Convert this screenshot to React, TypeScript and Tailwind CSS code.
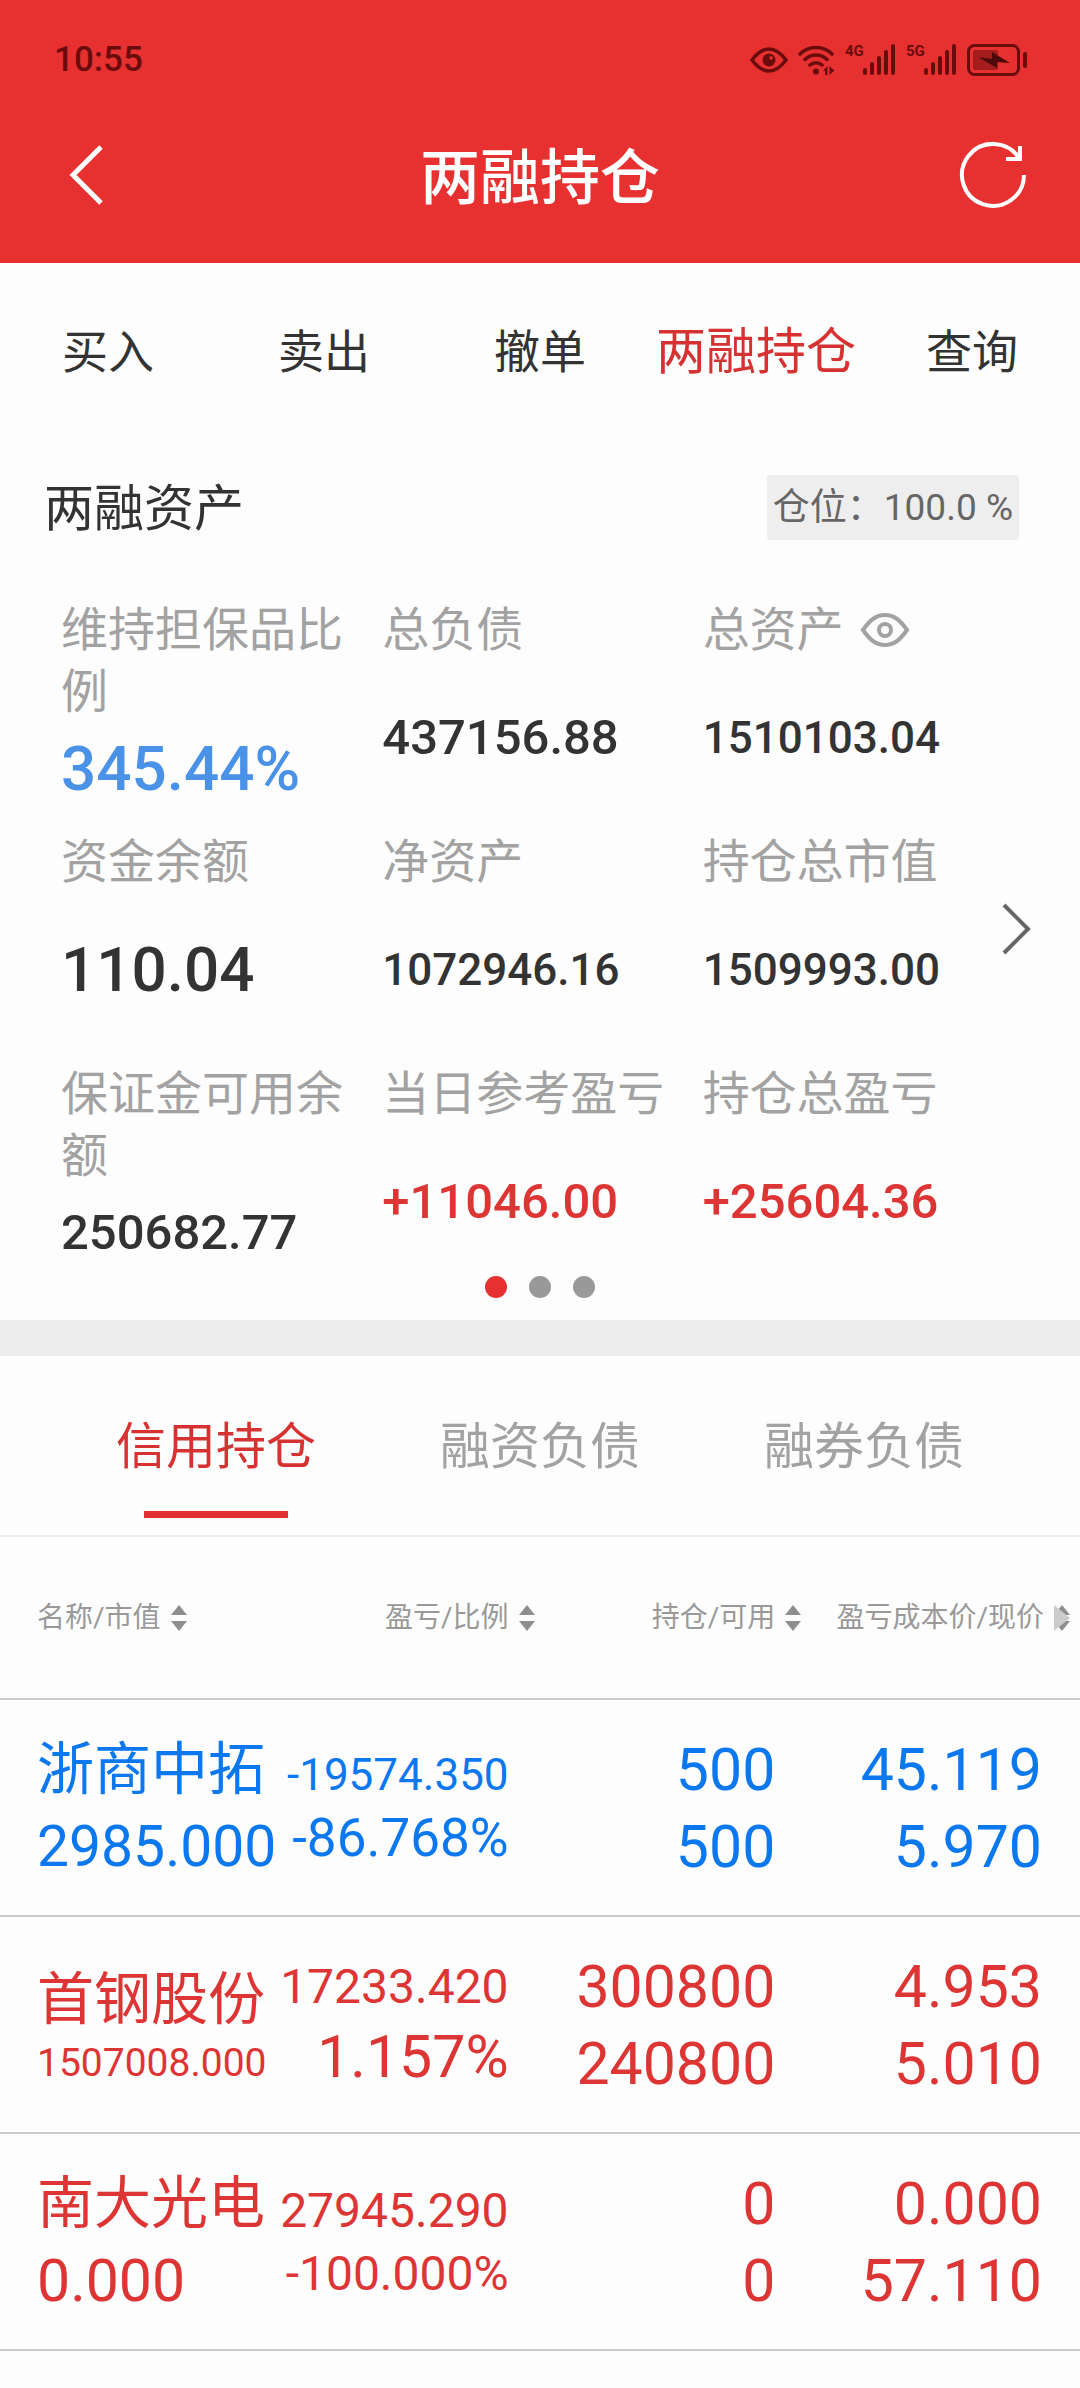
type Tone = 'up' | 'down'

const NAV = ['买入', '卖出', '撤单', '两融持仓', '查询']
const TABS = ['信用持仓', '融资负债', '融券负债']

const ASSETS = [
  { label: '维持担保品比例', value: '345.44%', style: 'text-[62px]/[68px] text-[#4a92e8]' },
  { label: '总负债', value: '437156.88', style: 'text-[49px]/[68px] text-[#333]' },
  { label: '总资产', value: '1510103.04', style: 'text-[44px]/[68px] text-[#333]', eye: true },
  { label: '资金余额', value: '110.04', style: 'text-[62px]/[68px] text-[#333]' },
  { label: '净资产', value: '1072946.16', style: 'text-[44px]/[68px] text-[#333]' },
  { label: '持仓总市值', value: '1509993.00', style: 'text-[44px]/[68px] text-[#333]' },
  { label: '保证金可用余额', value: '250682.77', style: 'text-[49px]/[68px] text-[#333]' },
  { label: '当日参考盈亏', value: '+11046.00', style: 'text-[49px]/[68px] text-[#dd3434]' },
  { label: '持仓总盈亏', value: '+25604.36', style: 'text-[49px]/[68px] text-[#dd3434]' },
]

// long numbers step down in size so that they stay inside their column
const XL = 'text-[59px]/[77px]'
const LG = 'text-[57px]/[77px]'
const MD = 'text-[53px]/[66px]'
const SM = 'text-[48px]/[63px]'
const XS = 'text-[44px]/[60px]'
const XXS = 'text-[39px]/[51px]'

const HOLDINGS: { name: string; tone: Tone; cells: [string, string][][] }[] = [
  {
    name: '浙商中拓',
    tone: 'down',
    cells: [
      [['浙商中拓', LG], ['2985.000', LG]],
      [['-19574.350', XS], ['-86.768%', MD]],
      [['500', XL], ['500', XL]],
      [['45.119', XL], ['5.970', XL]],
    ],
  },
  {
    name: '首钢股份',
    tone: 'up',
    cells: [
      [['首钢股份', LG], ['1507008.000', XXS]],
      [['17233.420', SM], ['1.157%', XL]],
      [['300800', XL], ['240800', XL]],
      [['4.953', XL], ['5.010', XL]],
    ],
  },
  {
    name: '南大光电',
    tone: 'up',
    cells: [
      [['南大光电', LG], ['0.000', XL]],
      [['27945.290', SM], ['-100.000%', SM]],
      [['0', XL], ['0', XL]],
      [['0.000', XL], ['57.110', XL]],
    ],
  },
]

const CELL_STYLES = [
  'pl-[37px] text-left',
  'pr-[26px] text-right',
  'pr-[26px] text-right',
  'pr-[38px] text-right',
]

function Signal({ label }: { label: string }) {
  return (
    <div className="flex items-start">
      <span className="w-[18px] text-[15px]/[14px] font-bold">{label}</span>
      <svg width="33" height="32" viewBox="0 0 33 32" fill="currentColor">
        <rect x="0" y="24" width="4" height="7" rx="2" />
        <rect x="7" y="18" width="4" height="13" rx="2" />
        <rect x="14" y="12" width="4" height="19" rx="2" />
        <rect x="21" y="6" width="4" height="25" rx="2" />
        <rect x="28" y="0" width="4" height="31" rx="2" />
      </svg>
    </div>
  )
}

function StatusBar() {
  return (
    <div className="flex items-center justify-between pt-[42px] pr-[52px] pl-[54px] text-[#6b0c0c]">
      <span className="text-[35px]/[36px] font-medium">10:55</span>
      <div className="flex items-center gap-[10px]">
        <svg width="38" height="26" viewBox="0 0 38 26" fill="none" stroke="currentColor" strokeWidth="3.5">
          <path d="M2 13C8 5 13 2 19 2s11 3 17 11c-6 8-11 11-17 11S8 21 2 13z" />
          <circle cx="19" cy="13" r="6.5" fill="currentColor" stroke="none" />
          <circle cx="21" cy="11" r="1.8" fill="#e73030" stroke="none" />
        </svg>
        <svg width="37" height="32" viewBox="0 0 37 32" fill="none" stroke="currentColor" strokeWidth="3.5" strokeLinecap="round">
          <path d="M2 10a23 23 0 0 1 32 0M7 15.500a16 16 0 0 1 22 0M12 21a9 9 0 0 1 12 0" />
          <circle cx="18" cy="27.500" r="3" fill="currentColor" stroke="none" />
          <path d="M25 27l4.500-5v9H27v-4zM31.500 22v9l5-4.500-2.500-2z" fill="currentColor" stroke="none" />
        </svg>
        <Signal label="4G" />
        <Signal label="5G" />
        <svg width="61" height="32" viewBox="0 0 61 32" fill="none">
          <rect x="1.500" y="1.500" width="50" height="29" rx="6" stroke="currentColor" strokeWidth="3" />
          <rect x="6" y="6" width="25" height="20" rx="2" fill="#a51c1c" />
          <path d="M11 13l14 2V8l18 11-13-1v6z" fill="#4d0a0a" />
          <rect x="56" y="8" width="4" height="16" rx="2" fill="currentColor" />
        </svg>
      </div>
    </div>
  )
}

function Header() {
  return (
    <header className="bg-[#e73030] pb-10">
      <StatusBar />
      <div className="mt-[49px] flex h-24 items-center justify-between pr-[53px] pl-[69px] text-white">
        <button type="button" aria-label="返回" className="w-[52px]">
          <svg width="36" height="60" viewBox="0 0 36 60" fill="none" stroke="currentColor" strokeWidth="5">
            <path d="M32 2L4 30l28 28" />
          </svg>
        </button>
        <h1 className="pt-2 text-[60px]/[80px] font-medium">两融持仓</h1>
        <button type="button" aria-label="刷新">
          <svg width="68" height="68" viewBox="0 0 68 68" fill="none" stroke="currentColor" strokeWidth="4">
            <path d="M65 34A31 31 0 1 1 60 17" />
            <path d="M61 5v13H47" />
          </svg>
        </button>
      </div>
    </header>
  )
}

function Assets() {
  return (
    <section className="mt-[34px] pb-[22px]">
      <div className="flex items-center justify-between pr-[61px] pl-[44px]">
        <h2 className="pt-1 text-[50px]/[61px] text-[#333]">两融资产</h2>
        <span className="rounded-sm bg-[#eee] px-[6px] text-[37px]/[65px] text-[#666]">仓位：100.0 %</span>
      </div>
      <div className="mt-[59px] flex items-start pr-[49px] pl-[61px]">
        <dl className="grid flex-1 grid-cols-[322fr_321fr_300fr] gap-y-7">
          {ASSETS.map((a) => (
            <div key={a.label} className="flex h-51 flex-col">
              <dt className="flex items-center gap-4 text-[47px]/[62px] text-[#a2a2a2]">
                {a.label}
                {a.eye && (
                  <button type="button" aria-label="隐藏金额">
                    <svg width="50" height="34" viewBox="0 0 50 34" fill="none" stroke="currentColor" strokeWidth="4">
                      <path d="M3 17C10 7 16 2 25 2s15 5 22 15c-7 10-13 15-22 15S10 27 3 17z" />
                      <circle cx="25" cy="17" r="6" />
                    </svg>
                  </button>
                )}
              </dt>
              <dd className={`flex flex-1 items-center pt-3 font-medium ${a.style}`}>{a.value}</dd>
            </div>
          ))}
        </dl>
        <button type="button" aria-label="下一页" className="self-center pb-2 text-[#666]">
          <svg width="29" height="52" viewBox="0 0 29 52" fill="none" stroke="currentColor" strokeWidth="4">
            <path d="M2 2l24 24L2 50" />
          </svg>
        </button>
      </div>
      <div className="mt-[9px] flex justify-center gap-[22px]">
        <span className="size-[22px] rounded-full bg-[#e73030]" />
        <span className="size-[22px] rounded-full bg-[#999]" />
        <span className="size-[22px] rounded-full bg-[#999]" />
      </div>
    </section>
  )
}

function SortIcon() {
  return (
    <svg width="16" height="26" viewBox="0 0 16 26" fill="#8e8e8e">
      <path d="M8 0l8 10H0zM8 26l8-10H0z" />
    </svg>
  )
}

// last column: the sort arrows sit behind the scroll hint
function MoreIcon() {
  return (
    <svg width="16" height="26" viewBox="0 0 16 26">
      <path d="M8 0l8 10H0zM8 26l8-10H0z" fill="#8e8e8e" />
      <path d="M0 0l16 13L0 26z" fill="#cbcbcb" />
    </svg>
  )
}

function SortHead({ label, more }: { label: string; more?: boolean }) {
  return (
    <button type="button" className="inline-flex items-center gap-[10px] whitespace-nowrap">
      {label}
      {more ? <MoreIcon /> : <SortIcon />}
    </button>
  )
}

function Holdings() {
  return (
    <table className="w-full table-fixed border-collapse">
      <thead>
        <tr className="h-[162px] border-b-2 border-[#ccc] text-[28px]/[36px] text-[#999]">
          <th className="w-[25%] pl-[37px] text-left font-normal">
            <SortHead label="名称/市值" />
          </th>
          <th className="w-[24.5%] text-right font-normal">
            <SortHead label="盈亏/比例" />
          </th>
          <th className="w-[24.7%] text-right font-normal">
            <SortHead label="持仓/可用" />
          </th>
          <th className="pr-[10px] text-right font-normal">
            <SortHead label="盈亏成本价/现价" more />
          </th>
        </tr>
      </thead>
      <tbody>
        {HOLDINGS.map((h) => (
          <tr
            key={h.name}
            className={`h-[217px] border-b-2 border-[#ccc] ${h.tone === 'up' ? 'text-[#dd3434]' : 'text-[#0b78f0]'}`}
          >
            {h.cells.map((lines, i) => (
              <td key={i} className={`whitespace-nowrap ${CELL_STYLES[i]}`}>
                {lines.map(([text, size], j) => (
                  <span key={j} className={`block ${size}`}>
                    {text}
                  </span>
                ))}
              </td>
            ))}
          </tr>
        ))}
      </tbody>
    </table>
  )
}

export default function App() {
  return (
    <div className="min-h-screen bg-[#fdfdfd] font-[Roboto,'Noto_Sans_CJK_SC',sans-serif]">
      <Header />
      <nav className="grid h-[178px] grid-cols-5 items-center">
        {NAV.map((item) => (
          <button
            key={item}
            type="button"
            className={item === '两融持仓' ? 'text-[50px]/[64px] text-[#d63232]' : 'text-[46px]/[64px] text-[#333]'}
          >
            {item}
          </button>
        ))}
      </nav>
      <Assets />
      <div className="h-9 bg-[#ededed]" />
      <div className="grid grid-cols-3 border-b-2 border-[#eee] px-[54px]">
        {TABS.map((tab, i) => (
          <button
            key={tab}
            type="button"
            className={`flex h-[179px] flex-col items-center pt-[59px] text-[50px]/[64px] ${i === 0 ? 'text-[#d63232]' : 'text-[#a2a2a2]'}`}
          >
            {tab}
            {i === 0 && <span className="mt-8 h-[7px] w-[144px] bg-[#e03030]" />}
          </button>
        ))}
      </div>
      <Holdings />
    </div>
  )
}
